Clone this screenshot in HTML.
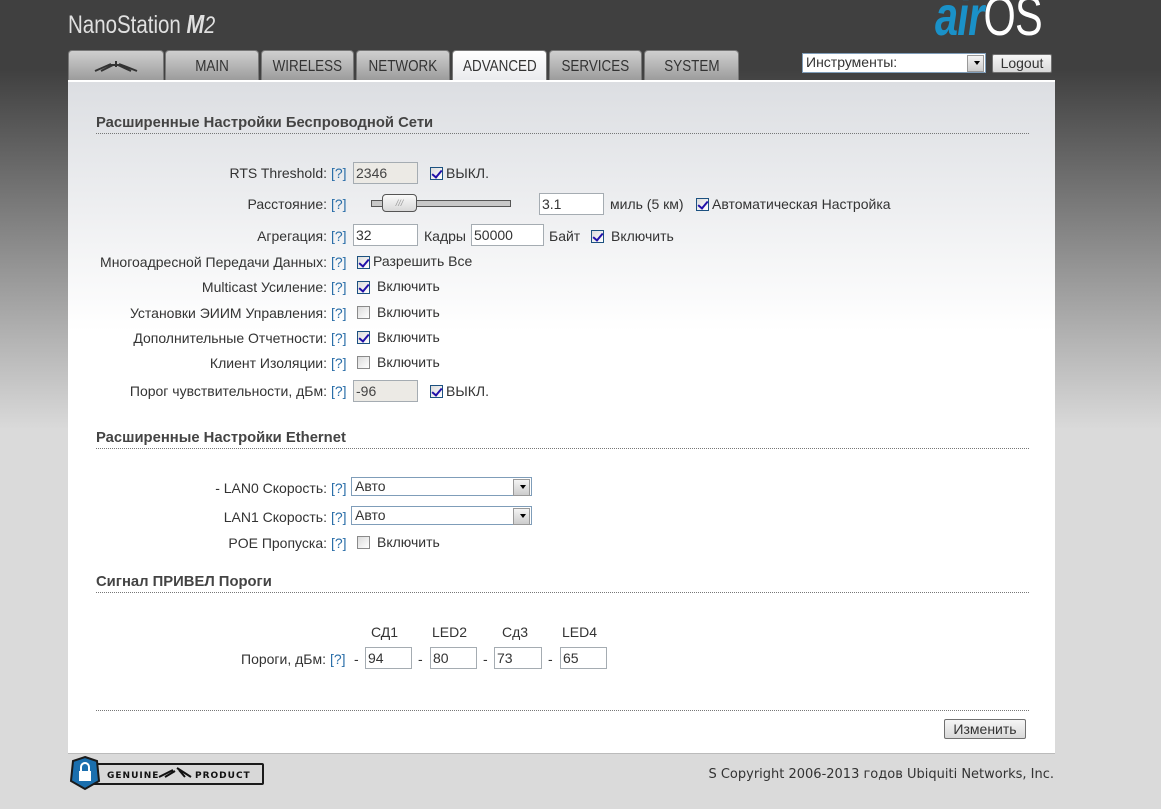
<!DOCTYPE html>
<html><head><meta charset="utf-8"><style>
*{margin:0;padding:0;box-sizing:border-box}
body{width:1161px;height:809px;overflow:hidden;position:relative;font-family:"Liberation Sans",Arial,sans-serif;font-size:14px;color:#333;
background:linear-gradient(#404040 0,#404040 70px,#dadada 430px,#dadada 809px)}
.a{position:absolute;white-space:nowrap;line-height:16px}
.lbl{position:absolute;left:0;width:327px;text-align:right;line-height:16px;white-space:nowrap}
.q{position:absolute;left:331px;color:#2a6ea8;line-height:16px}
.in{position:absolute;height:22px;border:1px solid #a5acb2;background:#fff;font-size:14px;line-height:20px;padding-left:2px}
.dis{background:#eceae5;color:#444}
.cb{position:absolute;width:13px;height:13px;border:1px solid #1c5180;background:linear-gradient(135deg,#dcdcdc,#fff)}
.cb.on::after{content:"";position:absolute;left:3px;top:0px;width:4px;height:8px;border:solid #21a;border-width:0 2px 2px 0;transform:rotate(40deg)}
.h{position:absolute;left:96px;font-weight:bold;color:#444;font-size:14.8px;line-height:16px}
.dl{position:absolute;left:96px;width:933px;border-top:1px dotted #777;height:0}
.tab{position:absolute;top:50px;height:30px;border-radius:4px 4px 0 0;background:linear-gradient(#cfcfcf,#9c9c9c);border:1px solid #777;border-bottom:none;text-align:center;font-size:16px;line-height:31px;color:#333}
.tab span{display:inline-block;transform:scaleX(.84)}
.sel{position:absolute;height:19px;border:1px solid #7f9db9;background:#fff;line-height:17px;padding-left:3px}
.sel::after{content:"";position:absolute;right:1px;top:1px;width:15px;height:15px;background:linear-gradient(#f4f4f4,#ccc);border:1px solid #999}
.sel b{position:absolute;right:5px;top:7px;border:3px solid transparent;border-top:4px solid #000;z-index:2}
.btn{position:absolute;border:1px solid #707070;border-radius:2px;background:linear-gradient(#f6f6f6,#d8d8d8);text-align:center}
</style></head><body>
<div class="a" style="left:68px;top:9px;font-size:25px;line-height:30px;color:#e0e0e0;transform:scaleX(.82);transform-origin:0 0">NanoStation <i style="font-weight:bold;font-size:26px">M</i><i style="font-size:24px">2</i></div>
<div class="a" style="left:935px;top:-12px;font-size:56px;line-height:56px;letter-spacing:-1px;transform:scaleX(.74);transform-origin:0 0"><i style="color:#1a91c8;font-weight:bold">air</i><span style="color:#fff">OS</span></div>

<div class="tab" style="left:68px;width:96px"><svg width="50" height="14" viewBox="0 0 50 14" style="margin-top:8px"><path d="M4 12 L20 5 M10 12 L22 6 M25 2 L25 8 M28 5 L46 12 M27 6 L40 12 M20 6 L30 6" stroke="#333" stroke-width="2" fill="none"/></svg></div>
<div class="tab" style="left:165px;width:94px"><span>MAIN</span></div>
<div class="tab" style="left:261px;width:93px"><span>WIRELESS</span></div>
<div class="tab" style="left:356px;width:94px"><span>NETWORK</span></div>
<div class="tab" style="left:452px;width:95px;background:linear-gradient(#fff,#e8e9ec);height:32px"><span>ADVANCED</span></div>
<div class="tab" style="left:549px;width:93px"><span>SERVICES</span></div>
<div class="tab" style="left:644px;width:95px"><span>SYSTEM</span></div>

<div class="sel" style="left:802px;top:53px;width:184px;height:20px;font-size:14px">Инструменты:<b></b></div>
<div class="btn" style="left:992px;top:54px;width:60px;height:19px;line-height:17px;font-size:14px">Logout</div>

<div style="position:absolute;left:68px;top:80px;width:987px;height:2px;background:#fff"></div>
<div style="position:absolute;left:68px;top:82px;width:987px;height:671px;background:linear-gradient(#dcdee2,#fff 250px,#fff)"></div>

<div class="h" style="top:115px">Расширенные Настройки Беспроводной Сети</div>
<div class="dl" style="top:133px"></div>

<div class="lbl" style="top:165px">RTS Threshold:</div><div class="q" style="top:165px">[?]</div>
<div class="in dis" style="left:353px;top:162px;width:65px">2346</div>
<div class="cb on" style="left:430px;top:167px"></div><div class="a" style="left:446px;top:165px">ВЫКЛ.</div>

<div class="lbl" style="top:196px">Расстояние:</div><div class="q" style="top:196px">[?]</div>
<div style="position:absolute;left:371px;top:200px;width:140px;height:7px;background:#c8c8c8;border:1px solid #555"></div>
<div style="position:absolute;left:382px;top:194px;width:35px;height:18px;border:1px solid #555;border-radius:4px;background:linear-gradient(#fafafa,#d8d8d8);font-size:9px;color:#999;text-align:center;line-height:16px;font-style:italic">///</div>
<div class="in" style="left:539px;top:193px;width:65px">3.1</div>
<div class="a" style="left:610px;top:196px">миль (5 км)</div>
<div class="cb on" style="left:696px;top:198px"></div><div class="a" style="left:712px;top:196px">Автоматическая Настройка</div>

<div class="lbl" style="top:228px">Агрегация:</div><div class="q" style="top:228px">[?]</div>
<div class="in" style="left:353px;top:224px;width:65px">32</div>
<div class="a" style="left:424px;top:228px">Кадры</div>
<div class="in" style="left:471px;top:224px;width:73px">50000</div>
<div class="a" style="left:549px;top:228px">Байт</div>
<div class="cb on" style="left:591px;top:230px"></div><div class="a" style="left:611px;top:228px">Включить</div>

<div class="lbl" style="top:254px">Многоадресной Передачи Данных:</div><div class="q" style="top:254px">[?]</div>
<div class="cb on" style="left:357px;top:256px"></div><div class="a" style="left:373px;top:253px">Разрешить Все</div>

<div class="lbl" style="top:279px">Multicast Усиление:</div><div class="q" style="top:279px">[?]</div>
<div class="cb on" style="left:357px;top:281px"></div><div class="a" style="left:377px;top:278px">Включить</div>

<div class="lbl" style="top:305px">Установки ЭИИМ Управления:</div><div class="q" style="top:305px">[?]</div>
<div class="cb" style="left:357px;top:306px;border-color:#8a8a8a"></div><div class="a" style="left:377px;top:304px">Включить</div>

<div class="lbl" style="top:330px">Дополнительные Отчетности:</div><div class="q" style="top:330px">[?]</div>
<div class="cb on" style="left:357px;top:331px"></div><div class="a" style="left:377px;top:329px">Включить</div>

<div class="lbl" style="top:355px">Клиент Изоляции:</div><div class="q" style="top:355px">[?]</div>
<div class="cb" style="left:357px;top:356px;border-color:#8a8a8a"></div><div class="a" style="left:377px;top:354px">Включить</div>

<div class="lbl" style="top:383px">Порог чувствительности, дБм:</div><div class="q" style="top:383px">[?]</div>
<div class="in dis" style="left:353px;top:380px;width:65px">-96</div>
<div class="cb on" style="left:430px;top:385px"></div><div class="a" style="left:446px;top:383px">ВЫКЛ.</div>

<div class="h" style="top:430px">Расширенные Настройки Ethernet</div>
<div class="dl" style="top:448px"></div>

<div class="lbl" style="top:480px">- LAN0 Скорость:</div><div class="q" style="top:480px">[?]</div>
<div class="sel" style="left:351px;top:477px;width:181px">Авто<b></b></div>
<div class="lbl" style="top:509px">LAN1 Скорость:</div><div class="q" style="top:509px">[?]</div>
<div class="sel" style="left:351px;top:506px;width:181px">Авто<b></b></div>
<div class="lbl" style="top:535px">POE Пропуска:</div><div class="q" style="top:535px">[?]</div>
<div class="cb" style="left:357px;top:536px;border-color:#8a8a8a"></div><div class="a" style="left:377px;top:534px">Включить</div>

<div class="h" style="top:574px">Сигнал ПРИВЕЛ Пороги</div>
<div class="dl" style="top:592px"></div>

<div class="a" style="left:371px;top:624px">СД1</div>
<div class="a" style="left:432px;top:624px">LED2</div>
<div class="a" style="left:502px;top:624px">Сд3</div>
<div class="a" style="left:562px;top:624px">LED4</div>
<div class="lbl" style="top:651px;width:326px">Пороги, дБм:</div><div class="q" style="top:651px;left:330px">[?]</div>
<div class="a" style="left:354px;top:651px">-</div><div class="in" style="left:365px;top:647px;width:47px">94</div>
<div class="a" style="left:418px;top:651px">-</div><div class="in" style="left:430px;top:647px;width:47px">80</div>
<div class="a" style="left:483px;top:651px">-</div><div class="in" style="left:494px;top:647px;width:48px">73</div>
<div class="a" style="left:548px;top:651px">-</div><div class="in" style="left:560px;top:647px;width:47px">65</div>

<div class="dl" style="top:710px"></div>
<div class="btn" style="left:944px;top:719px;width:82px;height:20px;line-height:18px;font-size:14px">Изменить</div>

<div style="position:absolute;left:68px;top:753px;width:987px;height:1px;background:#bbb"></div>

<svg style="position:absolute;left:67px;top:755px" width="200" height="36" viewBox="0 0 200 36">
<rect x="20" y="8" width="177" height="22" rx="2" fill="#1a1a1a"/>
<rect x="22" y="10" width="173" height="18" fill="#d8d8d8"/>
<path d="M18 2 L30 6 L32 26 L18 34 L4 26 L6 6 Z" fill="#1b6fae" stroke="#1a1a1a" stroke-width="2"/>
<rect x="12" y="16" width="12" height="10" fill="#fff"/><path d="M14 16 V12 A4 4 0 0 1 22 12 V16" stroke="#fff" stroke-width="2" fill="none"/>
<text x="40" y="23" font-family="DejaVu Sans" font-weight="bold" font-size="9" fill="#111" letter-spacing="1">GENUINE</text>
<path d="M92 22 L106 15 M98 22 L108 16 M110 13 L124 22 M112 15 L118 22" stroke="#111" stroke-width="2"/>
<text x="128" y="23" font-family="DejaVu Sans" font-weight="bold" font-size="9" fill="#111" letter-spacing="1">PRODUCT</text>
</svg>
<div class="a" style="right:107px;top:767px;font-family:'DejaVu Sans',Verdana,sans-serif;font-size:13px;color:#333">S Copyright 2006-2013 годов Ubiquiti Networks, Inc.</div>
</body></html>
